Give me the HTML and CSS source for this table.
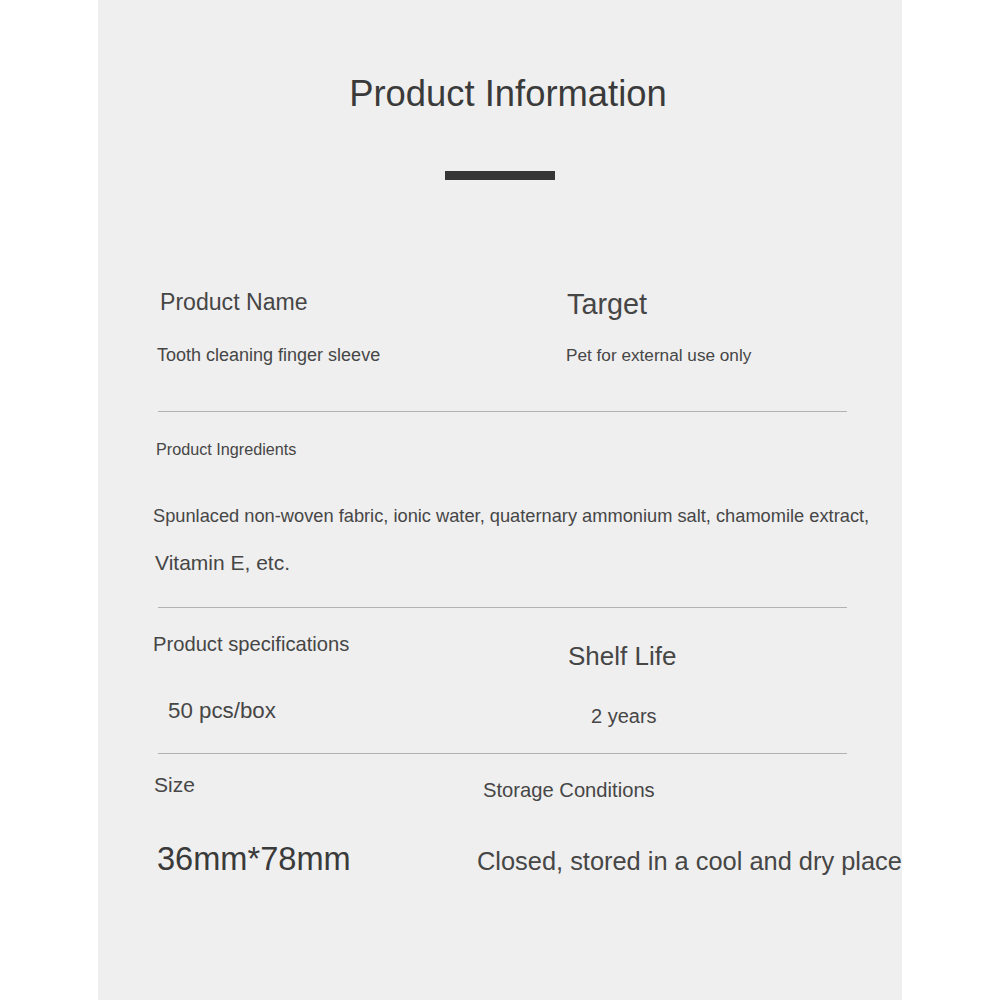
FILE: index.html
```html
<!DOCTYPE html>
<html lang="en">
<head>
<meta charset="utf-8">
<title>Product Information</title>
<link rel="stylesheet" href="styles.css">
</head>
<body>
<main class="panel">
  <h1 class="title">Product Information</h1>
  <div class="bar"></div>

  <section class="row row-name">
    <div class="cell">
      <h2 class="lbl lbl-name">Product Name</h2>
      <p class="val val-name">Tooth cleaning finger sleeve</p>
    </div>
    <div class="cell">
      <h2 class="lbl lbl-target">Target</h2>
      <p class="val val-target">Pet for external use only</p>
    </div>
  </section>
  <hr class="rule rule-1">

  <section class="block">
    <h2 class="lbl lbl-ingr">Product Ingredients</h2>
    <p class="val val-ingr1">Spunlaced non-woven fabric, ionic water, quaternary ammonium salt, chamomile extract,</p>
    <p class="val val-ingr2">Vitamin E, etc.</p>
  </section>
  <hr class="rule rule-2">

  <section class="row row-spec">
    <div class="cell">
      <h2 class="lbl lbl-spec">Product specifications</h2>
      <p class="val val-spec">50 pcs/box</p>
    </div>
    <div class="cell">
      <h2 class="lbl lbl-shelf">Shelf Life</h2>
      <p class="val val-shelf">2 years</p>
    </div>
  </section>
  <hr class="rule rule-3">

  <section class="row row-size">
    <div class="cell">
      <h2 class="lbl lbl-size">Size</h2>
      <p class="val val-size">36mm*78mm</p>
    </div>
    <div class="cell">
      <h2 class="lbl lbl-store">Storage Conditions</h2>
      <p class="val val-store">Closed, stored in a cool and dry place</p>
    </div>
  </section>
</main>
</body>
</html>
```

FILE: styles.css
```css
html, body {
  margin: 0;
  padding: 0;
  background: #ffffff;
}

body {
  font-family: "Liberation Sans", Arial, sans-serif;
  color: #464646;
}

.panel {
  width: 804px;
  min-height: 1000px;
  margin: 0 auto;
  background: #efefef;
  box-sizing: border-box;
  padding: 74px 55px 0 55px;
  overflow: hidden;
}

.title {
  margin: 0;
  padding-left: 16px;
  text-align: center;
  font-weight: normal;
  font-size: 36.4px;
  line-height: 40px;
  color: #3a3a3a;
}

.bar {
  width: 110px;
  height: 9px;
  margin: 57px auto 0 auto;
  background: #363636;
}

.lbl, .val {
  margin: 0;
  font-weight: normal;
  white-space: nowrap;
}

.row {
  display: grid;
  grid-template-columns: 412px 1fr;
  align-items: start;
}

.cell {
  display: flex;
  flex-direction: column;
  align-items: flex-start;
}

.rule {
  border: 0;
  height: 1px;
  background: #b2b2b2;
  margin: 0 0 0 5px;
  width: 689px;
}

/* Row 1 */
.row-name { margin-top: 107px; }
.lbl-name { font-size: 23.1px; line-height: 28px; margin-top: 1px; padding-left: 7px; }
.val-name { font-size: 18px; line-height: 22px; margin-top: 28px; padding-left: 4px; }
.lbl-target { font-size: 28.8px; line-height: 34px; padding-left: 2px; }
.val-target { font-size: 17.2px; line-height: 22px; margin-top: 23px; padding-left: 1px; }
.rule-1 { margin-top: 45px; }

/* Ingredients */
.lbl-ingr { font-size: 16.2px; line-height: 20px; margin-top: 27px; padding-left: 3px; }
.val-ingr1 { font-size: 18.25px; line-height: 22px; margin-top: 46px; }
.val-ingr2 { font-size: 21px; line-height: 26px; margin-top: 23px; padding-left: 2px; }
.rule-2 { margin-top: 31px; }

/* Row 3 */
.lbl-spec { font-size: 20.2px; line-height: 24px; margin-top: 24px; }
.val-spec { font-size: 22.3px; line-height: 26px; margin-top: 42px; padding-left: 15px; }
.lbl-shelf { font-size: 26px; line-height: 30px; margin-top: 33px; padding-left: 3px; }
.val-shelf { font-size: 20px; line-height: 24px; margin-top: 33px; padding-left: 26px; }
.rule-3 { margin-top: 25px; }

/* Row 4 */
.row-size { grid-template-columns: 324px 1fr; }
.lbl-size { font-size: 21px; line-height: 25px; margin-top: 18px; padding-left: 1px; }
.val-size { font-size: 32.6px; line-height: 38px; margin-top: 43px; padding-left: 4px; color: #3a3a3a; }
.lbl-store { font-size: 20.2px; line-height: 24px; margin-top: 24px; padding-left: 6px; }
.val-store { font-size: 25.4px; line-height: 30px; margin-top: 44px; }
```
